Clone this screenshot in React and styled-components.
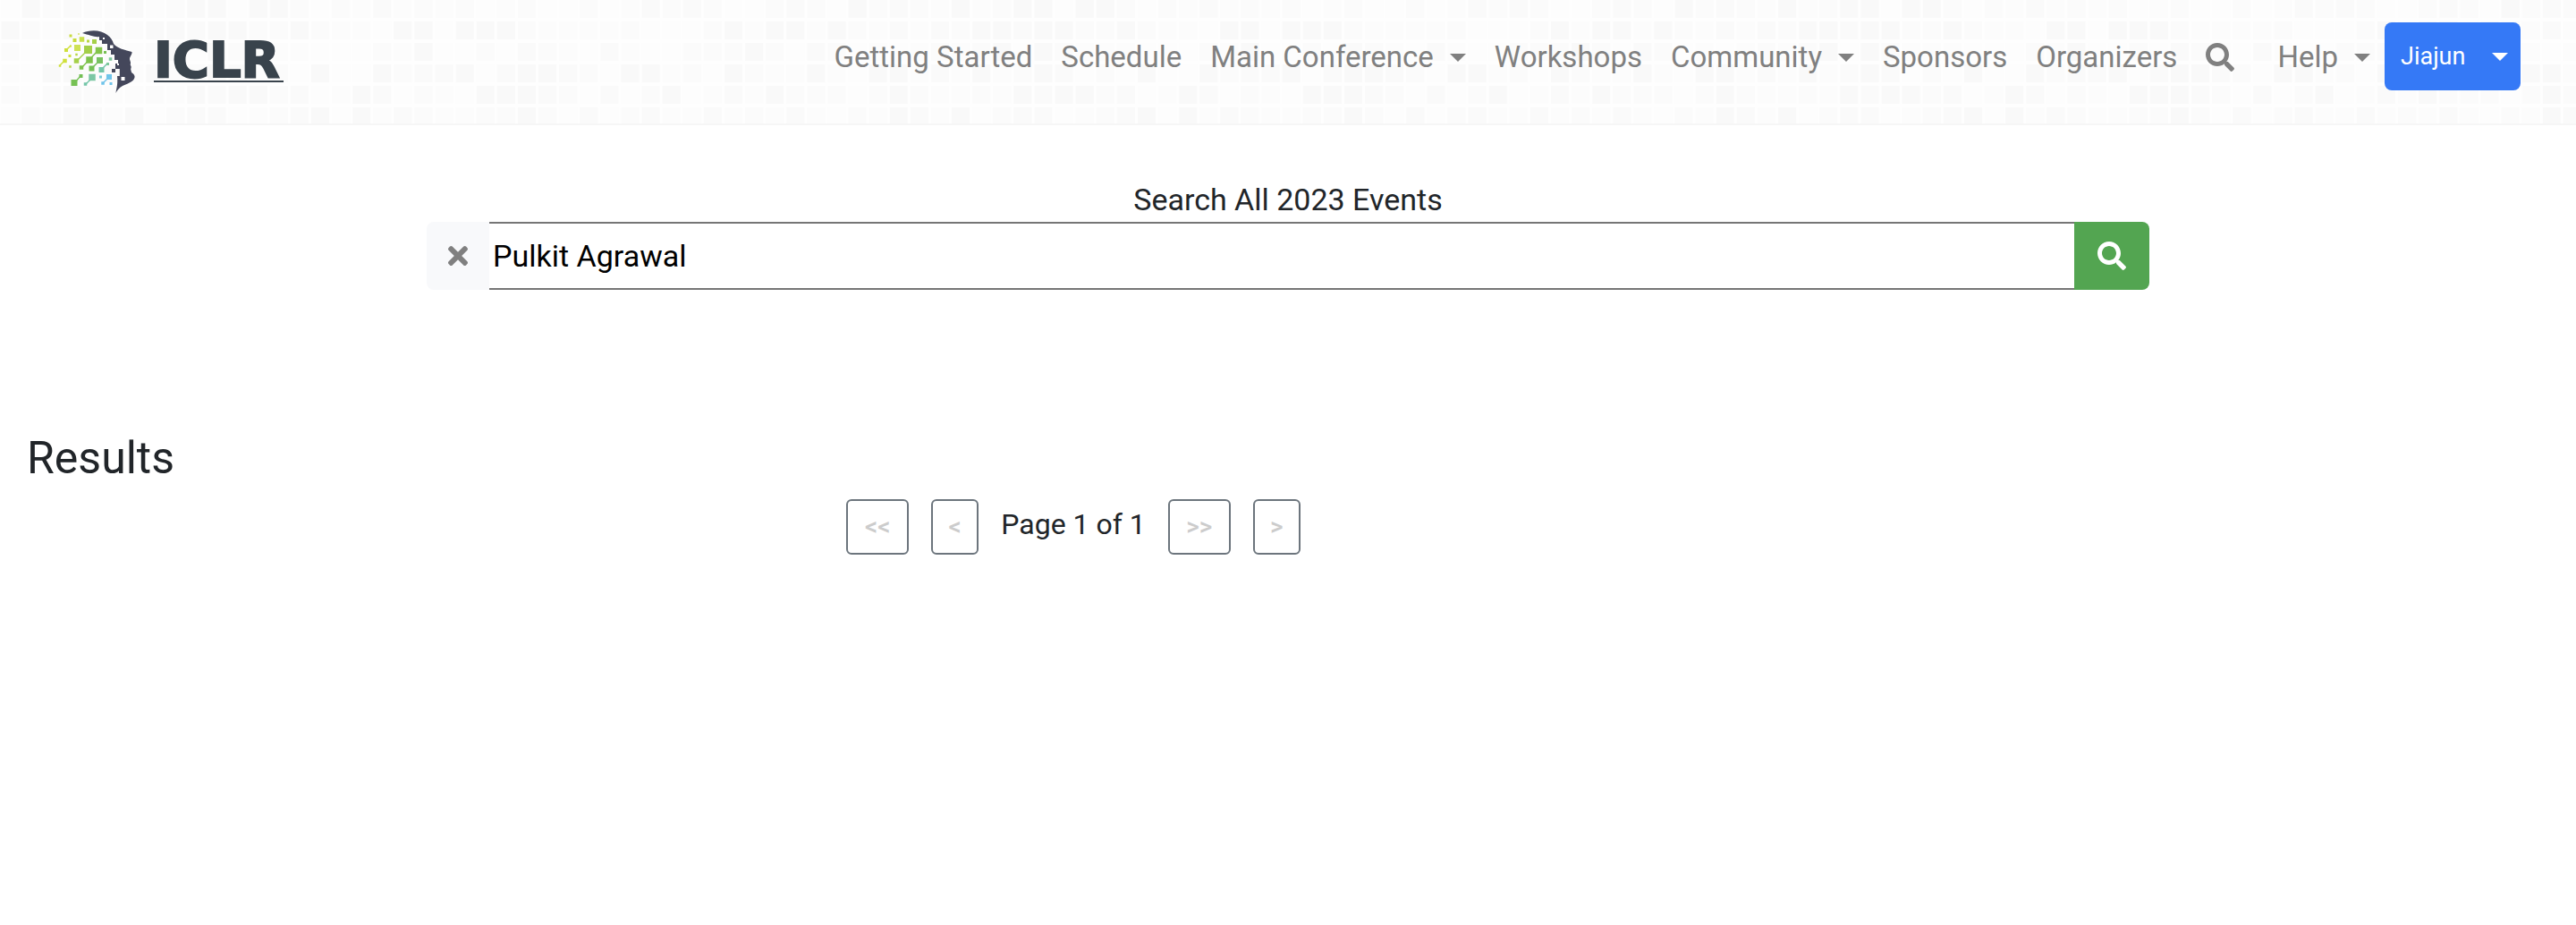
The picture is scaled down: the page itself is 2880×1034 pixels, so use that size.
import React from "react";
import styled, { createGlobalStyle } from "styled-components";
import { FaSearch, FaTimes } from "react-icons/fa";

const GlobalStyle = createGlobalStyle`
  *, *::before, *::after { box-sizing: border-box; }
  body {
    margin: 0;
    background: #fff;
    color: #212529;
    font-family: Roboto, "Liberation Sans", sans-serif;
    font-size: 34px;
    line-height: 48px;
  }
  button, input { font: inherit; }
`;

const Header = styled.header`
  position: relative;
  display: flex;
  align-items: flex-start;
  justify-content: space-between;
  height: 140px;
  padding: 25px 62px 0 64px;
  border-bottom: 2px solid #f6f6f6;
`;

const Backdrop = styled.svg`
  position: absolute;
  inset: 0;
  z-index: -1;
  width: 100%;
  height: 100%;
`;

const Brand = styled.a`
  display: flex;
  align-items: flex-start;
  gap: 20px;
  color: #39434c;
  text-decoration: none;
`;

const Mark = styled.svg`
  width: 88px;
  height: 80px;
`;

const BrandName = styled.span`
  margin-top: 19px;
  padding: 0 4px 0 0;
  border-bottom: 2px solid #39434c;
  font-family: "DejaVu Sans", sans-serif;
  font-size: 56px;
  font-weight: 700;
  line-height: 46px;
  -webkit-text-stroke: 2px #39434c;
`;

const Nav = styled.nav`
  display: flex;
  align-items: flex-start;
`;

const NavLink = styled.a`
  display: flex;
  align-items: center;
  gap: 18px;
  height: 78px;
  padding: 0 16px;
  color: #808080;
  font-size: 33px;
  text-decoration: none;
`;

const SearchLink = styled(NavLink)`
  padding-right: 32px;
`;

const Caret = styled.span`
  border: 9px solid transparent;
  border-top-color: currentColor;
  border-bottom: 0;
`;

const UserButton = styled.button`
  display: flex;
  align-items: center;
  justify-content: space-between;
  width: 152px;
  height: 76px;
  padding: 0 14px 0 18px;
  border: 0;
  border-radius: 8px;
  background: #3579f6;
  color: #fff;
  font-size: 27px;
`;

const SearchForm = styled.form`
  width: 67%;
  max-width: 1926px;
  margin: 58px auto 0;
`;

const SearchLabel = styled.label`
  display: block;
  line-height: 50px;
  text-align: center;
`;

const SearchBar = styled.div`
  display: flex;
  height: 76px;
`;

const ClearButton = styled.button`
  display: grid;
  place-items: center;
  width: 70px;
  padding: 0;
  border: 0;
  border-radius: 8px 0 0 8px;
  background: #f8f9fb;
  color: #808080;
  font-size: 32px;
`;

const SearchInput = styled.input`
  flex: 1;
  min-width: 0;
  padding: 0 4px;
  border: 2px solid #767676;
  border-width: 2px 0;
  background: #fff;
  color: #000;
  outline: 0;
`;

const SubmitButton = styled.button`
  display: grid;
  place-items: center;
  width: 84px;
  padding: 0;
  border: 0;
  border-radius: 0 8px 8px 0;
  background: #53a551;
  color: #fff;
  font-size: 32px;
`;

const Results = styled.section`
  display: grid;
  grid-template-columns: 10fr 2fr;
  margin-top: 158px;
`;

const Heading = styled.h2`
  grid-column: 1 / -1;
  margin: 0;
  padding: 0 30px;
  font-size: 50px;
  font-weight: 400;
  line-height: 60px;
`;

const Pager = styled.div`
  display: flex;
  justify-content: center;
  gap: 25px;
  margin-top: 16px;
`;

const PageButton = styled.button`
  width: ${(p) => (p.$wide ? 70 : 53)}px;
  height: 62px;
  padding: 0;
  border: 2px solid #6c757d;
  border-radius: 6px;
  background: #fff;
  color: #ccc;
  font-size: 28px;
  font-weight: 500;
`;

const PageStatus = styled.span`
  font-size: 32px;
  line-height: 56px;
`;

const LINKS = [
  { label: "Getting Started" },
  { label: "Schedule" },
  { label: "Main Conference", menu: true },
  { label: "Workshops" },
  { label: "Community", menu: true },
  { label: "Sponsors" },
  { label: "Organizers" },
];

const COLUMNS = 40;
const TILES = Array.from({ length: COLUMNS * 6 }, (_, i) => {
  const noise = Math.abs(Math.sin((i + 1) * 12.9898) * 43758.5453) % 1;
  return {
    x: (i % COLUMNS) * 23.1 + 1.5,
    y: Math.floor(i / COLUMNS) * 24,
    shade: 249 + Math.floor(noise * 5),
  };
});

function TileBackdrop() {
  return (
    <Backdrop aria-hidden="true">
      <defs>
        <pattern id="tiles" width="924" height="144" patternUnits="userSpaceOnUse">
          <rect width="924" height="144" fill="#fefefe" />
          {TILES.map((t, i) => (
            <rect key={i} x={t.x} y={t.y} width="20" height="20"
              fill={`rgb(${t.shade},${t.shade},${t.shade})`} />
          ))}
        </pattern>
      </defs>
      <rect width="100%" height="100%" fill="url(#tiles)" />
    </Backdrop>
  );
}

const SQUARES = [
  [13, 15, 3, "#c9dc3f"], [22, 13, 1.5, "#c9dc3f"], [17.5, 20, 4, "#c9dc3f"], [25.5, 19, 5.5, "#c9e04a"],
  [32.5, 21, 3, "#b9d844"], [39.5, 21.5, 5, "#a5d04a"], [8, 31, 4, "#cfe03c"], [13, 26.5, 2, "#cfe03c"],
  [20.5, 28.5, 7, "#cfe255"], [32.5, 30.5, 9, "#a3cf49"], [44.5, 31.5, 7.5, "#83c44b"], [51.5, 33.5, 3, "#76bf53"],
  [12, 37.5, 3, "#cfe03c"], [19.5, 36, 2.5, "#b9d844"], [6.5, 43, 4.5, "#cfe03c"], [1, 48.5, 2.5, "#cfe03c"],
  [19.5, 43, 5.5, "#a5d04a"], [34, 42, 7.5, "#7dc24b"], [45.5, 42.5, 7, "#77c061"], [57.5, 41, 3.5, "#7cc79a"],
  [12.5, 49.5, 2.5, "#b9d844"], [25, 50.5, 4.5, "#7dc24b"], [36.5, 51.5, 6, "#73bf55"], [47.5, 53, 6, "#74c5a8"],
  [54.5, 46.5, 3, "#7cc79a"], [24.5, 60, 4, "#73bf55"], [17, 67.5, 7, "#76c154"], [37, 61.5, 7.5, "#7cc7a4"],
  [29.5, 69, 3.5, "#74c5a8"], [46.5, 61, 3, "#7bcbd6"], [56, 61, 6, "#70c4ea"], [49, 68, 3.5, "#70c4ea"], [58, 68.5, 3, "#70c4ea"],
];

const LINES = [
  [8, 31, 13, 26, "#cfe03c"], [1, 48, 6, 43, "#cfe03c"], [20, 43, 32, 31, "#a5d04a"],
  [25, 51, 44, 31, "#7dc24b"], [36, 52, 45, 43, "#73bf55"], [47, 53, 54, 46, "#74c5a8"],
  [17, 68, 24, 60, "#76c154"], [30, 69, 37, 62, "#74c5a8"], [49, 68, 56, 61, "#70c4ea"],
];

function Logo() {
  return (
    <Mark viewBox="-2 0 88 80" aria-hidden="true">
      {LINES.map(([x1, y1, x2, y2, c], i) => (
        <line key={i} x1={x1} y1={y1} x2={x2} y2={y2} stroke={c} strokeWidth="1.4" />
      ))}
      {SQUARES.map(([x, y, s, c], i) => (
        <rect key={i} x={x - s / 2} y={y - s / 2} width={s} height={s} fill={c} />
      ))}
      <path fill="#44475b" d="M26 12 C34 8 47 8 54 14 C58 17 60 20 61 24 C65 29 74 31 81.500 33 C82 35 80 37 79 40 C78.500 42 80.500 44 80 46 C79 48 81.500 49 80.500 51 C79.500 53 81 54 81 56 C84 58 85.500 60 84 63 C82 67 75 69 71 71 C67 73 65 76 63.500 79 C64 74 66 70 65 60 L67.800 60 L67.800 52 L63 52 L63 46 L66 46 L66 42 L62 42 L62 36 L58 36 L58 31 L54 31 L54 24 L48 24 L48 20 L45 20 L45 16 C40 17 34 14 26 12 Z" />
      <rect x="59" y="52" width="4" height="4" fill="#44475b" />
      <g fill="#fff">
        <rect x="49" y="17" width="2" height="2" />
        <rect x="57" y="25.500" width="3.500" height="3.500" />
        <rect x="65" y="46" width="2" height="2" />
        <rect x="69.500" y="61" width="4" height="4" />
      </g>
    </Mark>
  );
}

export default function App() {
  return (
    <>
      <GlobalStyle />
      <Header>
        <TileBackdrop />
        <Brand href="#home">
          <Logo />
          <BrandName>ICLR</BrandName>
        </Brand>
        <Nav>
          {LINKS.map((l) => (
            <NavLink key={l.label} href="#">
              {l.label}
              {l.menu && <Caret />}
            </NavLink>
          ))}
          <SearchLink href="#" aria-label="Search"><FaSearch size={32} /></SearchLink>
          <NavLink href="#">Help<Caret /></NavLink>
          <UserButton type="button">Jiajun<Caret /></UserButton>
        </Nav>
      </Header>
      <main>
        <SearchForm onSubmit={(e) => e.preventDefault()}>
          <SearchLabel htmlFor="query">Search All 2023 Events</SearchLabel>
          <SearchBar>
            <ClearButton type="button" aria-label="Clear"><FaTimes /></ClearButton>
            <SearchInput id="query" defaultValue="Pulkit Agrawal" />
            <SubmitButton type="submit" aria-label="Search"><FaSearch /></SubmitButton>
          </SearchBar>
        </SearchForm>
        <Results>
          <Heading>Results</Heading>
          <Pager>
            <PageButton type="button" $wide disabled>&lt;&lt;</PageButton>
            <PageButton type="button" disabled>&lt;</PageButton>
            <PageStatus>Page 1 of 1</PageStatus>
            <PageButton type="button" $wide disabled>&gt;&gt;</PageButton>
            <PageButton type="button" disabled>&gt;</PageButton>
          </Pager>
        </Results>
      </main>
    </>
  );
}
